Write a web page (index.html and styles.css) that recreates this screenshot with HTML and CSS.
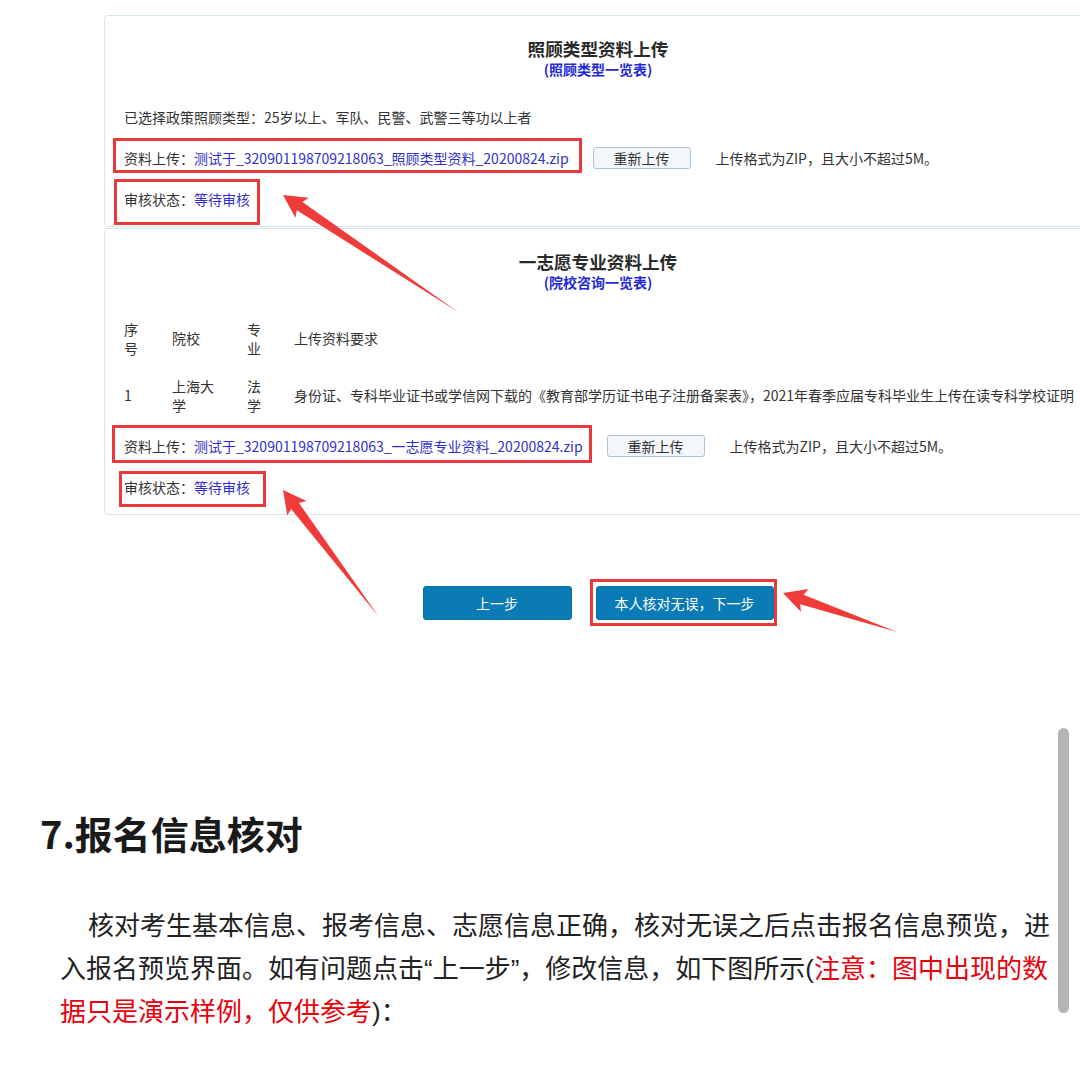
FILE: index.html
```html
<!DOCTYPE html>
<html lang="zh-CN">
<head>
<meta charset="utf-8">
<title>报名信息核对</title>
<link rel="stylesheet" href="styles.css">
</head>
<body>
<section class="figure">
  <div class="shot">
    <div class="card">
      <h3 class="card-title">照顾类型资料上传</h3>
      <div class="card-sub">(照顾类型一览表)</div>
      <p class="policy">已选择政策照顾类型：25岁以上、军队、民警、武警三等功以上者</p>
      <div class="upload-row">
        <span class="label">资料上传：</span><a class="file">测试于_320901198709218063_照顾类型资料_20200824.zip</a>
        <button class="reupload">重新上传</button>
        <span class="hint">上传格式为ZIP，且大小不超过5M。</span>
      </div>
      <div class="status-row"><span class="label">审核状态：</span><span class="status">等待审核</span></div>
    </div>
    <div class="card">
      <h3 class="card-title">一志愿专业资料上传</h3>
      <div class="card-sub">(院校咨询一览表)</div>
      <div class="table">
        <div class="tr">
          <div class="td c1">序号</div><div class="td c2">院校</div><div class="td c3">专业</div><div class="td c4">上传资料要求</div>
        </div>
        <div class="tr">
          <div class="td c1">1</div><div class="td c2">上海大学</div><div class="td c3">法学</div><div class="td c4">身份证、专科毕业证书或学信网下载的《教育部学历证书电子注册备案表》，2021年春季应届专科毕业生上传在读专科学校证明</div>
        </div>
      </div>
      <div class="upload-row upload-row-2">
        <span class="label">资料上传：</span><a class="file">测试于_320901198709218063_一志愿专业资料_20200824.zip</a>
        <button class="reupload">重新上传</button>
        <span class="hint">上传格式为ZIP，且大小不超过5M。</span>
      </div>
      <div class="status-row"><span class="label">审核状态：</span><span class="status">等待审核</span></div>
    </div>
    <div class="actions">
      <button class="btn btn-prev">上一步</button>
      <button class="btn btn-next">本人核对无误，下一步</button>
    </div>
  </div>

  <div class="mark mark-1"></div>
  <div class="mark mark-2"></div>
  <div class="mark mark-3"></div>
  <div class="mark mark-4"></div>
  <div class="mark mark-5"></div>

  <svg class="arrows" width="1080" height="700" viewBox="0 0 1080 700" xmlns="http://www.w3.org/2000/svg">
    <polygon points="283,195 308.8,197.8 302.4,201.9 458,312 296.8,210.3 295.4,217.8"/>
    <polygon points="283,490 306.5,501.1 299,503 379,617 291.1,509 287.3,515.6"/>
    <polygon points="783,593 808.6,589.1 803.5,594.7 897,632 800.3,604.2 800.9,611.8"/>
  </svg>
</section>

<h2 class="heading">7.报名信息核对</h2>
<p class="body-text">核对考生基本信息、报考信息、志愿信息正确，核对无误之后点击报名信息预览，进入报名预览界面。如有问题点击“上一步”，修改信息，如下图所示(<span class="note">注意：图中出现的数据只是演示样例，仅供参考</span>)：</p>

<div class="scrollbar"></div>
</body>
</html>
```

FILE: styles.css
```css
html, body {
  margin: 0;
  padding: 0;
}
body {
  width: 1080px;
  height: 1086px;
  overflow: hidden;
  position: relative;
  background: #ffffff;
  font-family: "Noto Sans CJK SC", "Noto Sans", sans-serif;
  color: #222;
}

.figure {
  position: relative;
  padding-top: 15px;
}

.shot {
  margin-left: 104px;
  width: 988px;
  font-size: 14px;
  color: #333;
}

.card {
  border: 1px solid #d5e5ed;
  border-radius: 4px;
  padding: 21px 19px 17px 19px;
}
.card + .card {
  margin-top: 1px;
}

.card-title {
  margin: 0;
  text-align: center;
  font-size: 17.6px;
  line-height: 23px;
  font-weight: 700;
  color: #2a2a2a;
}
.card-sub {
  text-align: center;
  font-size: 14px;
  line-height: 18px;
  font-weight: 700;
  color: #1f2bd2;
}

.policy {
  margin: 29px 0 0;
  line-height: 20px;
}

.upload-row {
  margin-top: 19px;
  height: 24px;
  display: flex;
  align-items: center;
  white-space: nowrap;
}
.upload-row-2 {
  margin-top: 10px;
}
.label {
  color: #333;
}
.file {
  color: #3030c8;
  text-decoration: none;
}
.reupload {
  margin-left: 24px;
  width: 98px;
  height: 22px;
  padding: 0;
  border: 1px solid #aac6dd;
  border-radius: 3px;
  background: #f2f7fc;
  font-family: inherit;
  font-size: 14px;
  color: #333;
  line-height: 20px;
}
.hint {
  margin-left: 25px;
}

.status-row {
  margin-top: 19px;
  line-height: 20px;
}
.status {
  color: #3030c8;
}

.table {
  margin-top: 19px;
}
.tr {
  display: grid;
  grid-template-columns: 48px 75px 47px auto;
  align-items: center;
  padding: 9.5px 0;
  line-height: 19px;
}
.c1, .c3 {
  padding-right: 30px;
}
.c2 {
  padding-right: 27px;
}
.c4 {
  white-space: nowrap;
}

.actions {
  margin-top: 71px;
  display: flex;
  justify-content: center;
  gap: 24px;
}
.btn {
  height: 34px;
  padding: 0;
  border: 1px solid #0a6fa3;
  border-radius: 3px;
  background: #0a7bb5;
  color: #ffffff;
  font-family: inherit;
  font-size: 14px;
}
.btn-prev {
  width: 149px;
}
.btn-next {
  width: 178px;
}

.mark {
  position: absolute;
  box-sizing: border-box;
  border: 3px solid #e8393b;
}
.mark-1 { left: 113px; top: 138px; width: 469px; height: 35px; }
.mark-2 { left: 114px; top: 179px; width: 146px; height: 46px; }
.mark-3 { left: 112px; top: 425px; width: 480px; height: 38px; }
.mark-4 { left: 119px; top: 471px; width: 147px; height: 36px; }
.mark-5 { left: 590px; top: 579px; width: 187px; height: 47px; }

.arrows {
  position: absolute;
  left: 0;
  top: 0;
  pointer-events: none;
}
.arrows polygon {
  fill: #f03b3b;
}

.heading {
  margin: 188px 0 0 40px;
  font-size: 38px;
  line-height: 50px;
  font-weight: 700;
  color: #1a1a1a;
}

.body-text {
  margin: 47px 0 0 60px;
  width: 995px;
  font-family: "Liberation Sans", "Noto Sans CJK SC", sans-serif;
  font-size: 26px;
  line-height: 43px;
  text-indent: 28px;
  color: #222;
}
.note {
  color: #e8000b;
}

.scrollbar {
  position: absolute;
  left: 1058px;
  top: 728px;
  width: 11px;
  height: 285px;
  border-radius: 6px;
  background: #b4b4b4;
}
```
